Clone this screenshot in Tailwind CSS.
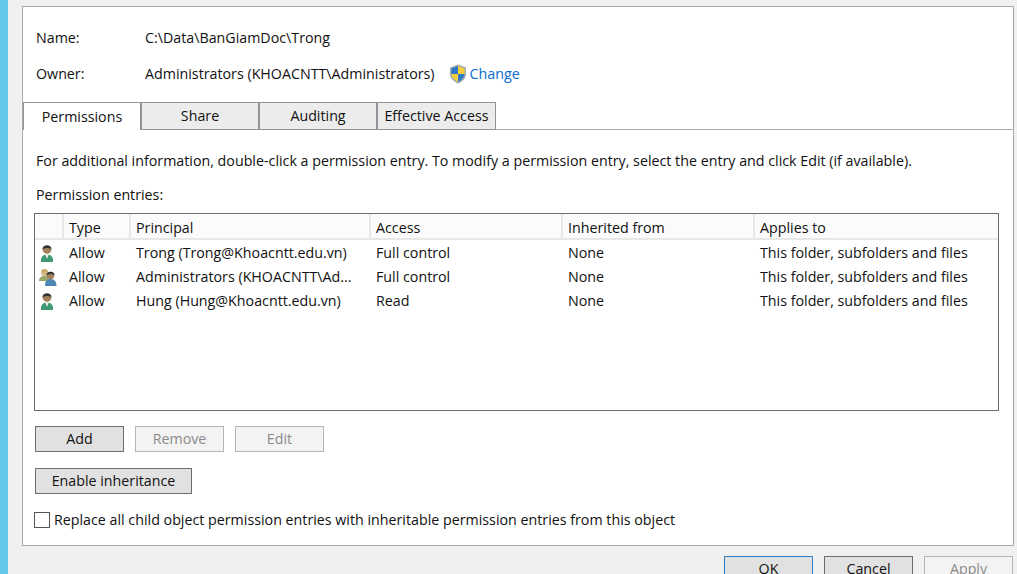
<!doctype html>
<html><head><meta charset="utf-8"><script src="https://cdn.jsdelivr.net/npm/@tailwindcss/browser@4"></script></head>
<body class="m-0">
<div class="w-[1017px] h-[574px] overflow-hidden flex bg-[#f0f0f0] text-[14.25px] text-[#111] font-['Open_Sans','Noto_Sans',sans-serif] leading-[20px]">
  <div class="w-[8px] shrink-0 bg-[#63c8ec]"></div>
  <div class="w-[1009px] pl-[14px] pt-[6px]">
    <div class="w-[992px] h-[540px] bg-white border border-[#a9a9a9] flex flex-col">
      <div class="h-[49px] pt-[13px] pl-[13px] flex items-center"><span class="w-[109px]">Name:</span><span>C:\Data\BanGiamDoc\Trong</span></div>
      <div class="h-[36px] pl-[13px] flex items-center">
        <span class="w-[109px]">Owner:</span><span>Administrators (KHOACNTT\Administrators)</span>
        <svg class="ml-[14px]" width="18" height="20" viewBox="0 0 18 20"><path d="M9 0.500 L1 3.500 V10 C1 14.500 4.500 17.500 9 19.500 C13.500 17.500 17 14.500 17 10 V3.500 Z" fill="#a4a9ae"/><path d="M9 2 V10 H2.500 V4.500 Z" fill="#2f78c8"/><path d="M9 2 L15.500 4.500 V10 H9 Z" fill="#f6cf3a"/><path d="M9 10 H2.500 C2.800 13.500 5.500 16.200 9 18 Z" fill="#f6cf3a"/><path d="M9 10 H15.500 C15.200 13.500 12.500 16.200 9 18 Z" fill="#2f78c8"/></svg>
        <a class="ml-[3px] text-[#0a6ccf]">Change</a>
      </div>
      <div class="h-[28px] mt-[10px] flex border-b border-[#a9a9a9]">
        <div class="w-[119px] h-[28px] bg-white border-l border-t border-r-2 border-[#8f949a] flex items-center justify-center pt-[1px]">Permissions</div>
        <div class="w-[118px] h-[28px] bg-[#ececec] border-t border-r-2 border-b border-[#8f949a] flex items-center justify-center">Share</div>
        <div class="w-[118px] h-[28px] bg-[#ececec] border-t border-r-2 border-b border-[#8f949a] flex items-center justify-center">Auditing</div>
        <div class="w-[118px] h-[28px] bg-[#ececec] border-t border-r border-b border-[#8f949a] flex items-center justify-center">Effective Access</div>
      </div>
      <div class="pl-[13px] pt-[21px] h-[20px] box-content">For additional information, double-click a permission entry. To modify a permission entry, select the entry and click Edit (if available).</div>
      <div class="pl-[13px] pt-[14px] h-[20px] box-content">Permission entries:</div>
      <div class="ml-[11px] mt-[8px] w-[965px] h-[198px] border border-[#6d6d6d] flex flex-col">
        <div class="h-[26px] flex bg-[#fbfbfb] border-b-2 border-[#e8e8e8]">
          <div class="w-[29px] border-r-2 border-[#e8e8e8]"></div>
          <div class="w-[67px] pl-[5px] pt-[4px] border-r-2 border-[#e8e8e8] flex items-center">Type</div>
          <div class="w-[240px] pl-[5px] pt-[4px] border-r-2 border-[#e8e8e8] flex items-center">Principal</div>
          <div class="w-[192px] pl-[5px] pt-[4px] border-r-2 border-[#e8e8e8] flex items-center">Access</div>
          <div class="w-[192px] pl-[5px] pt-[4px] border-r-2 border-[#e8e8e8] flex items-center">Inherited from</div>
          <div class="pl-[5px] pt-[4px] flex items-center">Applies to</div>
        </div>
        <div class="h-[24px] pt-[2px] flex items-center">
          <div class="w-[28px] pl-[4px]"><svg class="block" width="16" height="20" viewBox="0 0 16 20"><path d="M2 19 C1.500 14 4 11.500 8 11.500 C12 11.500 14.500 14 14 19 Z" fill="#3f9a72"/><path d="M6 11 L8 16 L10 11 Z" fill="#e8efe8"/><circle cx="8" cy="6.500" r="4.300" fill="#a47f5c"/><path d="M3.500 6.500 C3 1 13 1 12.500 6.500 C10.500 4.500 6 4.500 3.500 6.500 Z" fill="#34342f"/></svg></div>
          <div class="w-[67px] pl-[6px]">Allow</div><div class="w-[240px] pl-[6px]">Trong (Trong@Khoacntt.edu.vn)</div><div class="w-[192px] pl-[6px]">Full control</div><div class="w-[192px] pl-[6px]">None</div><div class="pl-[6px]">This folder, subfolders and files</div>
        </div>
        <div class="h-[24px] pt-[2px] flex items-center">
          <div class="w-[28px] pl-[4px]"><svg class="block" width="18" height="19" viewBox="0 0 18 19"><path d="M0 13 C0 9.500 2 8 5.500 8 C9 8 10 9.500 10 13 Z" fill="#9aa86a"/><circle cx="5.500" cy="4.500" r="3.500" fill="#d4b98c"/><path d="M2 4.500 C2 0 9 0 9 4.500 C7 3 4 3 2 4.500 Z" fill="#c8ab62"/><path d="M6 18 C6 13 8 11 11.500 11 C15 11 17.500 13 17.500 18 Z" fill="#4f86b8"/><circle cx="11.500" cy="7.500" r="3.800" fill="#a47f5c"/><path d="M7.500 7.500 C7 2.500 16 2.500 15.500 7.500 C13.500 5.500 10 5.500 7.500 7.500 Z" fill="#34342f"/></svg></div>
          <div class="w-[67px] pl-[6px]">Allow</div><div class="w-[240px] pl-[6px]">Administrators (KHOACNTT\Ad...</div><div class="w-[192px] pl-[6px]">Full control</div><div class="w-[192px] pl-[6px]">None</div><div class="pl-[6px]">This folder, subfolders and files</div>
        </div>
        <div class="h-[24px] pt-[2px] flex items-center">
          <div class="w-[28px] pl-[4px]"><svg class="block" width="16" height="20" viewBox="0 0 16 20"><path d="M2 19 C1.500 14 4 11.500 8 11.500 C12 11.500 14.500 14 14 19 Z" fill="#3f9a72"/><path d="M6 11 L8 16 L10 11 Z" fill="#e8efe8"/><circle cx="8" cy="6.500" r="4.300" fill="#a47f5c"/><path d="M3.500 6.500 C3 1 13 1 12.500 6.500 C10.500 4.500 6 4.500 3.500 6.500 Z" fill="#34342f"/></svg></div>
          <div class="w-[67px] pl-[6px]">Allow</div><div class="w-[240px] pl-[6px]">Hung (Hung@Khoacntt.edu.vn)</div><div class="w-[192px] pl-[6px]">Read</div><div class="w-[192px] pl-[6px]">None</div><div class="pl-[6px]">This folder, subfolders and files</div>
        </div>
      </div>
      <div class="ml-[12px] mt-[15px] flex gap-[11px]">
        <div class="w-[89px] h-[26px] bg-[#e1e1e1] border border-[#6d6d6d] flex items-center justify-center">Add</div>
        <div class="w-[89px] h-[26px] bg-[#f3f3f3] border border-[#b5b5b5] text-[#8a8a8a] flex items-center justify-center">Remove</div>
        <div class="w-[89px] h-[26px] bg-[#f3f3f3] border border-[#b5b5b5] text-[#8a8a8a] flex items-center justify-center">Edit</div>
      </div>
      <div class="ml-[12px] mt-[16px] w-[157px] h-[26px] bg-[#e1e1e1] border border-[#6d6d6d] flex items-center justify-center">Enable inheritance</div>
      <div class="ml-[11px] mt-[16px] flex items-center h-[20px]">
        <div class="w-[16px] h-[16px] border border-[#555] bg-white"></div>
        <span class="ml-[4px]">Replace all child object permission entries with inheritable permission entries from this object</span>
      </div>
    </div>
    <div class="mt-[10px] ml-[702px] flex gap-[11px]">
      <div class="w-[89px] h-[26px] bg-[#e1e1e1] border border-[#2f7fc1] flex items-center justify-center">OK</div>
      <div class="w-[89px] h-[26px] bg-[#e1e1e1] border border-[#6d6d6d] flex items-center justify-center">Cancel</div>
      <div class="w-[89px] h-[26px] bg-[#f3f3f3] border border-[#b5b5b5] text-[#8a8a8a] flex items-center justify-center">Apply</div>
    </div>
  </div>
</div>
</body></html>
